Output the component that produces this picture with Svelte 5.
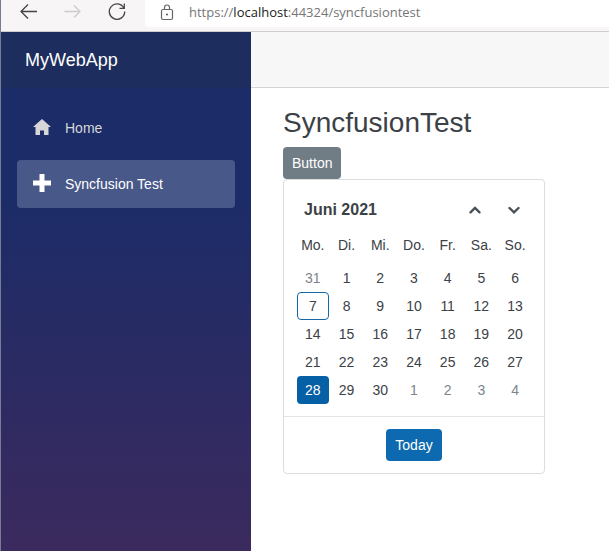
<script lang="ts">
	type Day = {
		day: number;
		other?: boolean;
		today?: boolean;
		selected?: boolean;
	};

	const weekdays = ['Mo.', 'Di.', 'Mi.', 'Do.', 'Fr.', 'Sa.', 'So.'];
	const daysInMonth = 30;

	let selectedDay = $state(28);

	// Five weeks, starting on Monday the 31st of May
	let weeks = $derived.by(() => {
		const days: Day[] = [{ day: 31, other: true }];
		for (let day = 1; day <= daysInMonth; day++) {
			days.push({ day, today: day === 7, selected: day === selectedDay });
		}
		for (let day = 1; days.length < 35; day++) {
			days.push({ day, other: true });
		}
		return [0, 1, 2, 3, 4].map(week => days.slice(week * 7, week * 7 + 7));
	});

	function select(item: Day) {
		if (!item.other) selectedDay = item.day;
	}
</script>

<div class="window">
	<div class="toolbar">
		<div class="nav-buttons">
			<button aria-label="Back">
				<svg width="20" height="20" viewBox="0 0 20 20"><path d="M18 9.500H2.200M9 2.500 2 9.500 9 16.500" /></svg>
			</button>
			<button aria-label="Forward" disabled>
				<svg width="20" height="20" viewBox="0 0 20 20"><path d="M1.500 9.500H17M11 3.500 17 9.500 11 15.500" /></svg>
			</button>
			<button aria-label="Refresh">
				<svg width="20" height="20" viewBox="0 0 20 20"><path d="M16.800 6A7.700 7.700 0 1 0 17.700 9.500M17.300 1.500V6.300H12.500" /></svg>
			</button>
		</div>
		<div class="address">
			<svg width="14" height="18" viewBox="0 0 14 18" aria-hidden="true">
				<rect x="1.500" y="5.500" width="11" height="10" rx="1.500" />
				<path d="M4.500 5.500V3.500a2.500 2.500 0 0 1 5 0v2" />
				<circle cx="7" cy="10.500" r="0.500" />
			</svg>
			<span class="url">https://<b>localhost</b>:44324/syncfusiontest</span>
		</div>
	</div>

	<div class="page">
		<div class="sidebar">
			<div class="brand"><a href="#home">MyWebApp</a></div>
			<nav>
				<a class="nav-link" href="#home">
					<svg width="18" height="18" viewBox="0 0 18 18"><path d="M9 1 0 9h2.500v8h4.500v-4.500h4V17h4.500V9H18z" /></svg>
					Home
				</a>
				<a class="nav-link active" href="#syncfusiontest">
					<svg width="18" height="18" viewBox="0 0 18 18"><path d="M6.500 0h5v6.500H18v5h-6.500V18h-5v-6.500H0v-5h6.500z" /></svg>
					Syncfusion Test
				</a>
			</nav>
		</div>

		<main>
			<div class="top-row"></div>
			<div class="content">
				<h1>SyncfusionTest</h1>
				<button class="btn btn-secondary">Button</button>

				<div class="calendar">
					<div class="calendar-header">
						<button class="title">Juni 2021</button>
						<button class="arrow" aria-label="Previous month">
							<svg width="14" height="14" viewBox="0 0 14 14"><path d="m2.500 9.300 4.500-4.300 4.500 4.300" /></svg>
						</button>
						<button class="arrow" aria-label="Next month">
							<svg width="14" height="14" viewBox="0 0 14 14"><path d="m2.500 5 4.500 4.300 4.500-4.300" /></svg>
						</button>
					</div>
					<table>
						<thead>
							<tr>
								{#each weekdays as weekday}
									<th scope="col">{weekday}</th>
								{/each}
							</tr>
						</thead>
						<tbody>
							{#each weeks as week}
								<tr>
									{#each week as item}
										<td>
											<button
												class="day"
												class:other={item.other}
												class:today={item.today}
												class:selected={item.selected}
												onclick={() => select(item)}
											>{item.day}</button>
										</td>
									{/each}
								</tr>
							{/each}
						</tbody>
					</table>
					<div class="calendar-footer">
						<button class="btn btn-primary" onclick={() => selectedDay = 7}>Today</button>
					</div>
				</div>
			</div>
		</main>
	</div>
</div>

<style>
	:global(body) {
		margin: 0;
		background: #fff;
	}

	.window {
		display: flex;
		flex-direction: column;
		min-height: 100vh;
		box-sizing: border-box;
		border-left: 1px solid #777c93;
		font-family: "Liberation Sans", Arial, sans-serif;
		font-size: 14px;
		color: #3c4146;
	}

	button {
		font: inherit;
		color: inherit;
		padding: 0;
		border: none;
		background: none;
		cursor: pointer;
	}

	/* Browser bar */
	.toolbar {
		display: flex;
		height: 31px;
		background: #f7f5f6;
		border-bottom: 1px solid #cfcdce;
	}

	.nav-buttons {
		display: flex;
		gap: 24px;
		padding: 2px 18px 0;
	}

	.nav-buttons button {
		width: 20px;
		height: 20px;
	}

	.nav-buttons svg {
		display: block;
		fill: none;
		stroke: #444;
		stroke-width: 1.3;
	}

	.nav-buttons button:disabled svg {
		stroke: #ccc;
	}

	.address {
		flex: 1;
		display: flex;
		align-items: center;
		gap: 15px;
		height: 27px;
		padding-left: 15px;
		box-sizing: border-box;
		background: #fff;
		border-bottom-left-radius: 4px;
	}

	.address svg {
		fill: none;
		stroke: #666;
		stroke-width: 1.2;
		margin-bottom: 2px;
	}

	.url {
		font-family: "Open Sans", "Noto Sans", sans-serif;
		font-size: 13px;
		line-height: 24px;
		padding-bottom: 3px;
		color: #767676;
	}

	.url b {
		font-weight: 400;
		color: #222;
	}

	.page {
		flex: 1;
		display: flex;
	}

	.sidebar {
		flex: none;
		width: 250px;
		background: linear-gradient(180deg, #1b2c68 0%, #1b2c68 30%, #3b2a5e 100%);
	}

	.brand {
		display: flex;
		align-items: center;
		height: 56px;
		padding-left: 24px;
		background: #1d2e5e;
	}

	.brand a {
		font-size: 18px;
		color: #fff;
		text-decoration: none;
	}

	nav {
		display: flex;
		flex-direction: column;
		gap: 8px;
		padding: 16px;
	}

	.nav-link {
		display: flex;
		align-items: center;
		gap: 14px;
		height: 48px;
		padding-left: 16px;
		border-radius: 4px;
		color: #d7d7d7;
		text-decoration: none;
	}

	.nav-link svg {
		fill: currentColor;
		margin-bottom: 3px;
	}

	.nav-link.active {
		background: #475889;
		color: #fff;
	}

	main {
		flex: 1;
	}

	.top-row {
		height: 55px;
		background: #f8f7f8;
		border-bottom: 1px solid #d4d3d4;
	}

	.content {
		padding: 18px 32px;
	}

	h1 {
		margin: 0 0 8px;
		font-size: 28px;
		font-weight: 400;
		line-height: 33px;
	}

	.btn {
		display: block;
		height: 32px;
		padding: 0 9px;
		border-radius: 4px;
		color: #fff;
	}

	.btn-secondary {
		background: #717d85;
	}

	.btn-primary {
		background: #0d6ab0;
	}

	.calendar {
		width: 260px;
		border: 1px solid #dcdddf;
		border-radius: 4px;
	}

	.calendar-header {
		display: flex;
		align-items: center;
		height: 32px;
		padding: 14px 11px 4px 20px;
	}

	.title {
		margin-right: auto;
		font-size: 16px;
		font-weight: 700;
	}

	.arrow {
		display: flex;
		align-items: center;
		justify-content: center;
		width: 39px;
		height: 32px;
	}

	.arrow svg {
		fill: none;
		stroke: #495057;
		stroke-width: 2.4;
		stroke-linecap: round;
	}

	table {
		width: 236px;
		margin: 0 12px 12px;
		table-layout: fixed;
		border-collapse: collapse;
	}

	th {
		height: 34px;
		padding: 0 0 4px;
		box-sizing: border-box;
		font-weight: 400;
	}

	td {
		height: 28px;
		padding: 0;
	}

	.day {
		display: block;
		width: 32px;
		height: 28px;
		margin: 0 auto;
		border-radius: 4px;
	}

	.day.other {
		color: #7d848a;
	}

	.day.today {
		border: 1px solid #1667a5;
	}

	.day.selected {
		background: #0560a6;
		color: #fff;
	}

	.calendar-footer {
		display: flex;
		justify-content: center;
		padding: 12px;
		border-top: 1px solid #e4e5e6;
	}
</style>
